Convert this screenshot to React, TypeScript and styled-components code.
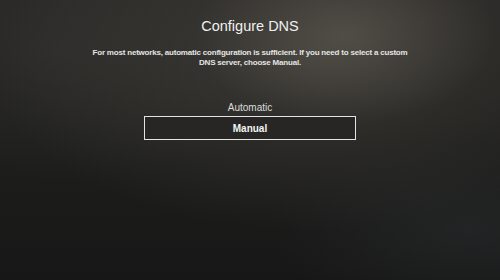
import React from 'react';
import styled, { createGlobalStyle } from 'styled-components';

const GlobalStyle = createGlobalStyle`
  html, body {
    margin: 0;
    padding: 0;
    background: #1a1a19;
  }
  body {
    font-family: 'Liberation Sans', Arial, sans-serif;
  }
`;

const options = [
  { label: 'Automatic', focused: false },
  { label: 'Manual', focused: true },
];

const App: React.FC = () => {
  return (
    <>
      <GlobalStyle />
      <Screen>
        <Title>Configure DNS</Title>
        <Description>
          For most networks, automatic configuration is sufficient. If you need to select a custom
          <br />
          DNS server, choose Manual.
        </Description>
        <OptionList>
          {options.map((opt) => (
            <Option key={opt.label} focused={opt.focused}>
              {opt.label}
            </Option>
          ))}
        </OptionList>
      </Screen>
    </>
  );
};
export default App;

const Screen = styled.div`
  width: 500px;
  height: 280px;
  box-sizing: border-box;
  padding-top: 17px;
  display: flex;
  flex-direction: column;
  align-items: center;
  overflow: hidden;
  color: #ececec;
  background:
    radial-gradient(ellipse 150px 90px at 345px 35px, rgba(112, 106, 96, 0.45), rgba(112, 106, 96, 0) 100%),
    radial-gradient(ellipse 320px 170px at 310px 60px, rgba(80, 77, 71, 0.5), rgba(80, 77, 71, 0) 100%),
    radial-gradient(ellipse 240px 130px at 60px 50px, rgba(56, 55, 52, 0.4), rgba(56, 55, 52, 0) 100%),
    radial-gradient(ellipse 200px 90px at 470px 230px, rgba(45, 48, 50, 0.45), rgba(45, 48, 50, 0) 100%),
    linear-gradient(180deg, #272624 0%, #1f1f1d 45%, #171717 100%);
`;

const Title = styled.h1`
  margin: 0;
  font-size: 14.5px;
  line-height: 18px;
  font-weight: 400;
  color: #f0f0f0;
`;

const Description = styled.p`
  margin: 13px 0 0;
  font-size: 8px;
  line-height: 10px;
  font-weight: 700;
  text-align: center;
  color: #e4e4e4;
  letter-spacing: -0.2px;
`;

const OptionList = styled.div`
  margin-top: 32px;
  display: flex;
  flex-direction: column;
  align-items: center;
  gap: 2px;
`;

const Option = styled.div<{ focused?: boolean }>`
  box-sizing: border-box;
  display: flex;
  align-items: center;
  justify-content: center;
  font-size: 10px;
  width: ${({ focused }) => (focused ? '212px' : 'auto')};
  height: ${({ focused }) => (focused ? '24px' : '14px')};
  font-weight: ${({ focused }) => (focused ? 700 : 400)};
  color: ${({ focused }) => (focused ? '#f4f4f4' : '#dcdcdc')};
  border: ${({ focused }) => (focused ? '1.5px solid #e4e2e6' : 'none')};
  background: ${({ focused }) => (focused ? '#272624' : 'transparent')};
`;
